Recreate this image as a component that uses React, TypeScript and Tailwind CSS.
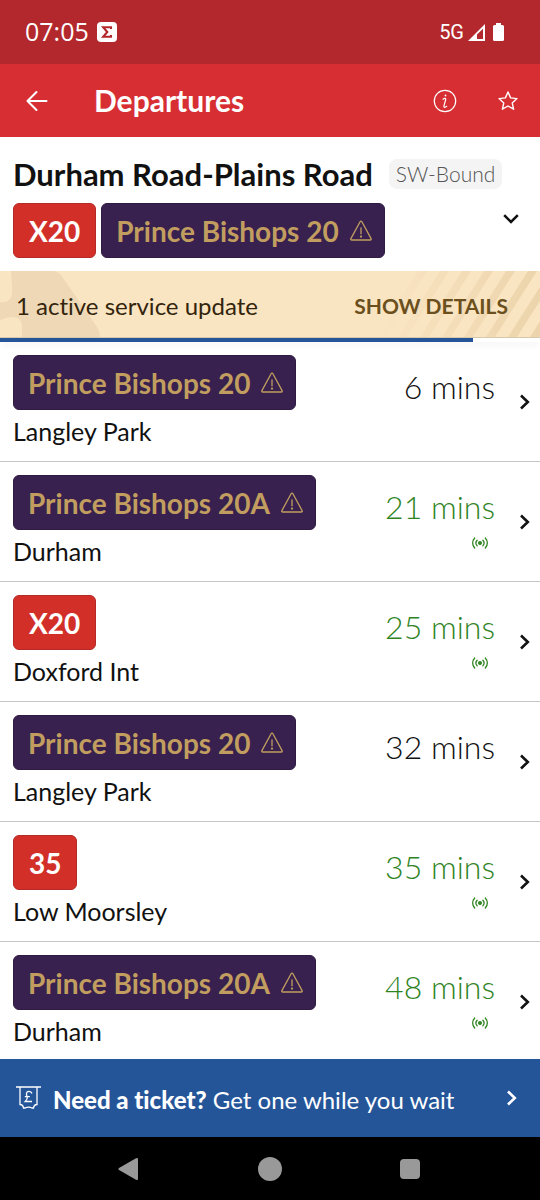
import React from "react";

type Line = "x20" | "35" | "pb20" | "pb20a";

interface Departure {
  line: Line;
  destination: string;
  due: string;
  live: boolean;
}

const departures: Departure[] = [
  { line: "pb20", destination: "Langley Park", due: "6 mins", live: false },
  { line: "pb20a", destination: "Durham", due: "21 mins", live: true },
  { line: "x20", destination: "Doxford Int", due: "25 mins", live: true },
  { line: "pb20", destination: "Langley Park", due: "32 mins", live: false },
  { line: "35", destination: "Low Moorsley", due: "35 mins", live: true },
  { line: "pb20a", destination: "Durham", due: "48 mins", live: true },
];

const lines: Record<Line, { name: string; premium: boolean }> = {
  x20: { name: "X20", premium: false },
  "35": { name: "35", premium: false },
  pb20: { name: "Prince Bishops 20", premium: true },
  pb20a: { name: "Prince Bishops 20A", premium: true },
};

function WarningIcon() {
  return (
    <svg className="h-6 w-6 shrink-0" viewBox="0 0 24 24" fill="none" stroke="currentColor" strokeWidth="1.3" strokeLinejoin="round" strokeLinecap="round" aria-hidden="true">
      <path d="M11.1 2.7 1.9 19.6c-.4.7 0 1.4.8 1.4h18.6c.8 0 1.2-.7.8-1.4L12.9 2.7c-.4-.7-1.4-.7-1.8 0Z" />
      <path d="M12 8.8v6" />
      <circle cx="12" cy="17.6" r=".5" fill="currentColor" />
    </svg>
  );
}

function Chevron({ className = "" }: { className?: string }) {
  return (
    <svg className={`h-4 w-3 shrink-0 ${className}`} viewBox="0 0 12 16" fill="none" stroke="currentColor" strokeWidth="2.6" aria-hidden="true">
      <path d="M2 1.5 8.8 8 2 14.5" />
    </svg>
  );
}

function LiveIcon() {
  return (
    <svg className="h-3 w-4" viewBox="0 0 16 12" fill="none" stroke="currentColor" strokeWidth="1.3" strokeLinecap="round" aria-label="Live">
      <circle cx="8" cy="6" r="2" fill="currentColor" stroke="none" />
      <path d="M5.1 3.300a4 4 0 0 0 0 5.400M10.900 3.300a4 4 0 0 1 0 5.400M2.700 1a7.200 7.200 0 0 0 0 10M13.300 1a7.200 7.200 0 0 1 0 10" />
    </svg>
  );
}

function LineBadge({ line }: { line: Line }) {
  const { name, premium } = lines[line];
  return (
    <span
      className={
        premium
          ? "flex h-[55px] items-center gap-[10px] rounded-md border border-[#2f1b42] bg-[#38214f] pr-[11px] pl-[14px] text-[28px] font-bold text-[#c19e5f]"
          : "flex h-[55px] items-center rounded-md border border-[#b52a26] bg-[#d32f29] px-[15px] text-[28px] font-bold text-white"
      }
    >
      <span className="whitespace-nowrap">{name}</span>
      {premium && <WarningIcon />}
    </span>
  );
}

function StatusBar() {
  return (
    <div className="flex h-16 shrink-0 items-center bg-[#b3282d] pr-9 pl-[25px] text-white">
      <span className="font-['Open_Sans',sans-serif] text-[25px]">07:05</span>
      <svg className="ml-2 h-5 w-5" viewBox="0 0 20 20" aria-hidden="true">
        <rect width="20" height="20" rx="4" fill="#fff" />
        <path d="M14 7V5.200H6.200L10.300 10l-4.100 4.800H14V13" fill="none" stroke="#b3282d" strokeWidth="2.100" />
      </svg>
      <span className="ml-auto font-[Roboto,sans-serif] text-[20px]">5G</span>
      <svg className="ml-1 h-[17px] w-[17px]" viewBox="0 0 17 17" aria-hidden="true">
        <path d="M0 17 17 0v17Z" fill="#fff" />
        <path d="M9 10.600 15 4.700V15H9Z" fill="#b3282d" />
      </svg>
      <svg className="ml-2 h-[18px] w-[11px]" viewBox="0 0 11 18" fill="#fff" aria-hidden="true">
        <path d="M3 0h5v2h1.500q1.500 0 1.500 1.500v13q0 1.500-1.500 1.500h-8Q0 18 0 16.500v-13Q0 2 1.500 2H3Z" />
      </svg>
    </div>
  );
}

function AppBar() {
  return (
    <header className="flex h-[73px] shrink-0 items-center bg-[#d72e33] pr-[21px] pl-[25px] text-white">
      <button aria-label="Back">
        <svg className="h-6 w-6" viewBox="0 0 24 24" fill="none" stroke="currentColor" strokeWidth="2.100" strokeLinecap="round" strokeLinejoin="round">
          <path d="M21.500 12H2.500M11.500 3 2.500 12l9 9" />
        </svg>
      </button>
      <h1 className="ml-[45px] text-[30px] font-bold">Departures</h1>
      <button className="ml-auto" aria-label="Information">
        <svg className="h-6 w-6" viewBox="0 0 24 24" fill="none" stroke="currentColor" strokeWidth="1.200" strokeLinecap="round" strokeLinejoin="round">
          <circle cx="12" cy="12" r="10.700" />
          <circle cx="12.500" cy="6.500" r=".9" fill="currentColor" stroke="none" />
          <path d="M10 10.200q1.200-.9 2-.8 1 .2.600 1.600l-1.600 5.600q-.4 1.500.6 1.700.9.100 2.100-1" />
        </svg>
      </button>
      <button className="ml-10" aria-label="Add to favourites">
        <svg className="h-[22px] w-[22px]" viewBox="0 0 22 22" fill="none" stroke="currentColor" strokeWidth="1.400" strokeLinejoin="round">
          <path d="m11 2 2.600 5.900 6.400.7-4.800 4.300 1.400 6.300-5.600-3.200-5.600 3.200 1.400-6.300L2 8.600l6.400-.7Z" />
        </svg>
      </button>
    </header>
  );
}

function StopSummary() {
  return (
    <section className="flex h-[134px] shrink-0 flex-col bg-white px-[13px] pt-[17px]">
      <div className="flex items-center gap-4">
        <h2 className="text-[31px] leading-[40px] font-bold whitespace-nowrap">Durham Road-Plains Road</h2>
        <span className="rounded-lg bg-[#f4f4f4] px-[7px] text-[21px] leading-[30px] font-light whitespace-nowrap text-[#555]">SW-Bound</span>
      </div>
      <div className="mt-[9px] flex items-center gap-[5px]">
        <LineBadge line="x20" />
        <LineBadge line="pb20" />
        <button className="mr-2 mb-6 ml-auto" aria-label="Show all lines">
          <svg className="h-3 w-4" viewBox="0 0 16 12" fill="none" stroke="currentColor" strokeWidth="2.600">
            <path d="M1.200 2.200 8 9l6.800-6.800" />
          </svg>
        </button>
      </div>
    </section>
  );
}

function ServiceUpdate() {
  return (
    <section className="relative flex h-[67px] shrink-0 items-center justify-between overflow-hidden border-b border-[#d9c9ab] bg-[#fae5c3] pt-1 pr-8 pl-4">
      <svg className="absolute top-0 left-0 h-[66px] w-[100px]" viewBox="0 0 100 66" fill="#eed8b5" aria-hidden="true">
        <path d="M11 0h42q6 0 10 7l34 49q3 5 3 10H22V56q0-10-9-10-5 0-13 3V31q6 1 10-3 3-4 2-12Z" />
      </svg>
      <svg className="absolute top-0 right-0 h-[66px] w-[170px]" viewBox="0 0 170 66" aria-hidden="true">
        <defs>
          <linearGradient id="fade" gradientUnits="userSpaceOnUse" x1="10" y1="0" x2="170" y2="0">
            <stop offset="0" stopColor="#e8cfa5" stopOpacity="0" />
            <stop offset="1" stopColor="#e8cfa5" stopOpacity=".8" />
          </linearGradient>
        </defs>
        <path
          fill="url(#fade)"
          d="M6 66 48 0h9L15 66ZM28 66 70 0h9L37 66ZM50 66 92 0h9L59 66ZM72 66 114 0h9L81 66ZM94 66 136 0h9l-42 66ZM116 66 158 0h9l-42 66ZM138 66l42-66h9l-42 66ZM160 66l42-66h9l-42 66Z"
        />
      </svg>
      <p className="relative text-[24px] text-[#33240c]">1 active service update</p>
      <button className="relative text-[21px] font-bold text-[#6b4f1c]">SHOW DETAILS</button>
    </section>
  );
}

function DepartureRow({ departure }: { departure: Departure }) {
  return (
    <li className="border-b border-[#c6c6c6]">
      <a href="#departure" className="flex h-[119px] pr-[9px] pl-[13px]">
        <div className="flex flex-col items-start pt-[13px]">
          <LineBadge line={departure.line} />
          <span className="text-[25px] leading-[42px]">{departure.destination}</span>
        </div>
        <div className={departure.live ? "ml-auto flex flex-col items-end pt-[25px] text-[#2f841f]" : "ml-auto flex flex-col items-end pt-[25px]"}>
          <span className="text-[32px] leading-[40px] font-light">{departure.due}</span>
          {departure.live && (
            <span className="mt-[10px] mr-[7px]">
              <LiveIcon />
            </span>
          )}
        </div>
        <Chevron className="ml-6 self-center" />
      </a>
    </li>
  );
}

function TicketBar() {
  return (
    <a href="#tickets" className="flex h-[78px] shrink-0 items-center bg-[#255599] pr-[22px] pl-4 text-white">
      <svg className="h-6 w-[25px] shrink-0" viewBox="0 0 25 24" fill="none" stroke="currentColor" strokeWidth="1.300" aria-hidden="true">
        <path d="M0 1h25M4 1v17.500q3 0 3.500 3.500h1.500q3.500-1.800 7 0h1.500q.5-3.500 3.500-3.500V1" />
        <path d="M16 7.500q-.8-2.200-3-2.200-2.700 0-2.500 3 .2 1.200.7 2.700.5 2.500-1.900 4.500H16M8.800 10.700h5" />
      </svg>
      <span className="ml-3 pt-1 text-[24px] whitespace-nowrap">
        <strong className="font-black">Need a ticket?</strong> Get one while you wait
      </span>
      <Chevron className="ml-auto" />
    </a>
  );
}

function SystemNav() {
  return (
    <nav className="flex h-[63px] shrink-0 items-center justify-center gap-[118px] bg-black pr-1 text-[#999]">
      <button aria-label="System back">
        <svg className="h-6 w-6" viewBox="0 0 24 24" fill="currentColor">
          <path d="M20 1.300q2-1 2 1v19.400q0 2-2 1L3 13q-1.500-1 0-2Z" />
        </svg>
      </button>
      <button aria-label="Home" className="h-6 w-6 rounded-full bg-[#999]" />
      <button aria-label="Recent apps" className="h-5 w-5 rounded-sm bg-[#999]" />
    </nav>
  );
}

export default function App() {
  return (
    <div className="flex h-screen flex-col bg-white font-[Lato,'Noto_Sans',sans-serif] text-[#111] [font-variant-ligatures:none]">
      <StatusBar />
      <AppBar />
      <StopSummary />
      <ServiceUpdate />
      <div className="relative h-1 shrink-0 bg-white shadow-md" role="progressbar" aria-label="Next refresh" aria-valuenow={88}>
        <div className="h-full w-7/8 bg-[#255599]" />
      </div>
      <ul className="min-h-0 flex-1 overflow-y-auto [scrollbar-width:none]">
        {departures.map((departure, index) => (
          <DepartureRow key={index} departure={departure} />
        ))}
      </ul>
      <TicketBar />
      <SystemNav />
    </div>
  );
}
